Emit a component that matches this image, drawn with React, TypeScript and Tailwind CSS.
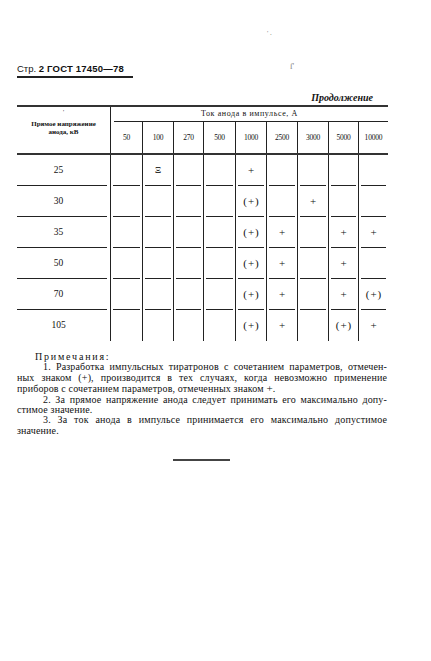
import React from 'react';

const COLS = ['50', '100', '270', '500', '1000', '2500', '3000', '5000', '10000'];

// values per row: index by column
const ROWS: { kv: string; cells: Record<number, string> }[] = [
  { kv: '25', cells: { 1: '*', 4: '+' } },
  { kv: '30', cells: { 4: '(+)', 6: '+' } },
  { kv: '35', cells: { 4: '(+)', 5: '+', 7: '+', 8: '+' } },
  { kv: '50', cells: { 4: '(+)', 5: '+', 7: '+' } },
  { kv: '70', cells: { 4: '(+)', 5: '+', 7: '+', 8: '(+)' } },
  { kv: '105', cells: { 4: '(+)', 5: '+', 7: '(+)', 8: '+' } },
];

const GRID = 'grid grid-cols-[93px_32px_31px_30px_32px_31px_31px_31px_30px_30px]';

function Mark({ v }: { v: string }) {
  if (v === '*') {
    return <span className="text-[9px] font-bold leading-none text-[#333]">Ξ</span>;
  }
  if (v === '(+)') {
    return (
      <span className="text-[11px] leading-none">
        (<span className="mx-[1px]">+</span>)
      </span>
    );
  }
  return <span className="text-[11px] leading-none">+</span>;
}

function DataRow({ kv, cells, last }: { kv: string; cells: Record<number, string>; last: boolean }) {
  return (
    <div className={GRID}>
      <div className="flex h-[31px] flex-col">
        <div className="flex flex-1 items-center justify-center pr-[10px] text-[9.5px]">{kv}</div>
        {!last && <div className="mr-[3px] h-px bg-[#222]" />}
      </div>
      {COLS.map((c, i) => (
        <div key={c} className="flex h-[31px] flex-col border-l border-[#222]">
          <div className="flex flex-1 items-center justify-center">
            {cells[i] ? <Mark v={cells[i]} /> : null}
          </div>
          {!last && <div className="mx-[2px] h-px bg-[#222]" />}
        </div>
      ))}
    </div>
  );
}

export default function App() {
  return (
    <div className="relative h-[661px] w-[431px] overflow-hidden bg-white text-[#111] font-['Liberation_Serif',serif]">
      {/* scan specks */}
      <span className="absolute left-[267px] top-[28px] text-[7px] text-[#777]">'&nbsp;.</span>
      <span className="absolute left-[290px] top-[60px] text-[9px] text-[#888]">ſ'</span>

      <div className="px-[17px] pt-[63px]">
        {/* running head */}
        <div className="w-[116px] border-b-2 border-[#222] pb-[1px] font-['Liberation_Sans',sans-serif] text-[9.5px] leading-[12px]">
          <span>Стр. </span>
          <span className="font-bold tracking-[0.2px]">2 ГОСТ 17450—78</span>
        </div>

        <div className="mt-[14px] w-[371px] pr-[15px] text-right text-[10px] font-bold italic leading-[12px]">
          Продолжение
        </div>

        {/* table */}
        <div className="mt-[1px] w-[371px]">
          <div className={`${GRID} border-y-2 border-[#333]`}>
            <div className="row-span-2 flex h-[46px] flex-col items-center">
              <span className="mt-[2px] text-[6px] leading-none">'</span>
              <div className="mt-[6px] text-center text-[7px] font-bold leading-[7.5px]">
                Прямое напряжение
                <br />
                анода, кВ
              </div>
            </div>
            <div className="col-span-9 flex h-[15px] flex-col border-l border-[#222]">
              <div className="flex flex-1 items-center justify-center text-[8px] tracking-[0.6px]">
                Ток анода в импульсе, А
              </div>
              <div className="ml-[3px] h-px bg-[#222]" />
            </div>
            {COLS.map((c) => (
              <div
                key={c}
                className="flex h-[31px] items-center justify-center border-l border-[#222] text-[7.5px] tracking-[-0.2px]"
              >
                {c}
              </div>
            ))}
          </div>

          {ROWS.map((r, i) => (
            <DataRow key={r.kv} kv={r.kv} cells={r.cells} last={i === ROWS.length - 1} />
          ))}
        </div>

        {/* notes */}
        <div className="mt-[11px] w-[370px] text-[10px] leading-[10.4px] tracking-[0.15px]">
          <div className="pl-[18px] tracking-[1.8px]">Примечания:</div>
          <div className="pl-[26px] [text-align-last:justify] text-justify">
            1. Разработка импульсных тиратронов с сочетанием параметров, отмечен-
          </div>
          <div className="[text-align-last:justify] text-justify">
            ных знаком (+), производится в тех случаях, когда невозможно применение
          </div>
          <div>
            приборов с сочетанием параметров, отмеченных знаком <span className="text-[11px]">+</span>.
          </div>
          <div className="pl-[26px] [text-align-last:justify] text-justify">
            2. За прямое напряжение анода следует принимать его максимально допу-
          </div>
          <div>стимое значение.</div>
          <div className="pl-[26px] [text-align-last:justify] text-justify">
            3. За ток анода в импульсе принимается его максимально допустимое
          </div>
          <div>значение.</div>
        </div>

        <div className="ml-[156px] mt-[23px] h-[2px] w-[57px] bg-[#444]" />
      </div>
    </div>
  );
}
